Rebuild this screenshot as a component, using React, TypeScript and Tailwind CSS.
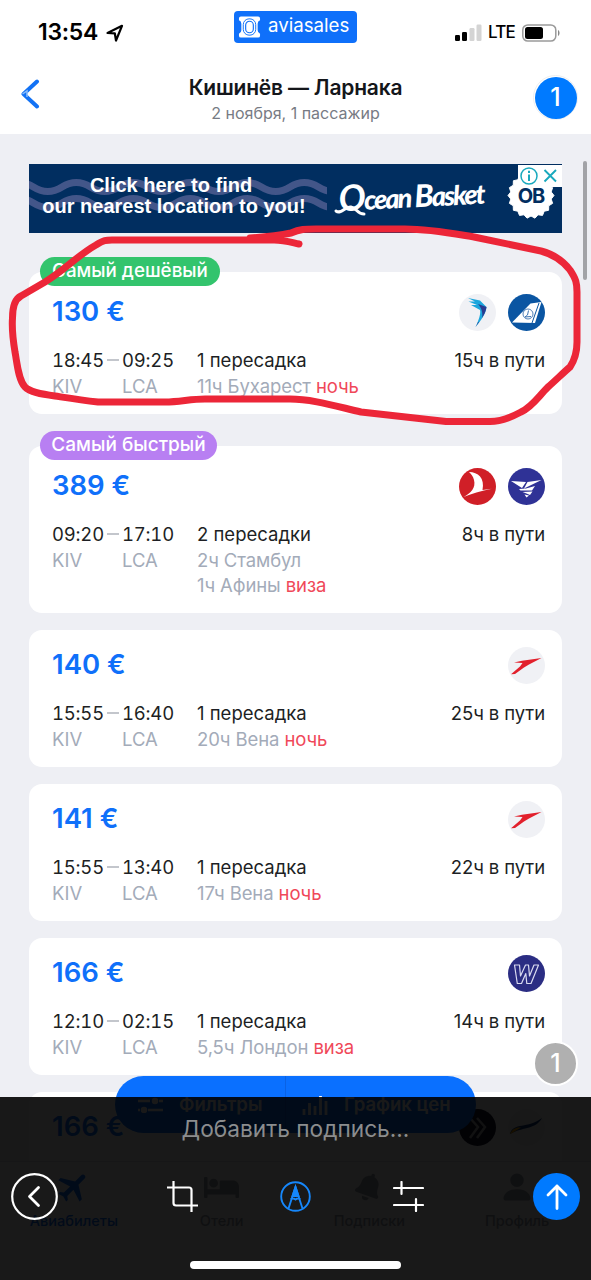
import React from "react";
import { MdFlight } from "react-icons/md";
import { FaBed, FaBell } from "react-icons/fa";
import { BsPersonFill } from "react-icons/bs";

type Stop = { text: string; warn?: string };
type Ticket = {
  price: string;
  from: string;
  to: string;
  stops: string;
  via: Stop[];
  total: string;
  logos: React.ReactNode[];
  badge?: { text: string; style: string };
};

function Logo({ bg, children }: { bg: string; children: React.ReactNode }) {
  return (
    <svg viewBox="0 0 37 37" className="size-[37px]">
      <circle cx="18.5" cy="18.5" r="18.5" fill={bg} />
      {children}
    </svg>
  );
}

const hiSky = (
  <Logo bg="#f0f1f5">
    <path d="M9 4 L21 6.500 L27.500 13 C27 20 22 26 16.500 33 C20 26 22 19 21 16 L12 11 L18 11 L9.500 7.500 L16 7.500 Z" fill="#1ba6dc" />
    <path d="M19 10 L27.500 13 C27 17 25 21 23 24 C24 19 23 15 19 10 Z" fill="#2a3b90" />
    <path d="M19 28.500 L20.500 27.500 L16.500 33 Z" fill="#2a3b90" />
  </Logo>
);
const tarom = (
  <Logo bg="#0a55a2">
    <path d="M4 28.500 L22.500 9.500 L33.500 8 L27 29 Z" fill="#fff" />
    <path d="M31 9 L24 29" stroke="#0a55a2" strokeWidth="1" />
    <circle cx="20" cy="20" r="5" fill="none" stroke="#3d73b0" strokeWidth="0.9" />
    <path d="M20.500 16.500 L19.500 21 L17 23 L23 22.500" fill="none" stroke="#3d73b0" strokeWidth="1" />
  </Logo>
);
const turkish = (
  <Logo bg="#d01f27">
    <path d="M10 4 C19 4 26 10 23.500 22 L33 20.800 C22 23 12 26 4.500 29 C12 25 17 20 15 12 C14 8 12 6 10 4 Z" fill="#fff" />
  </Logo>
);
const bluebird = (
  <Logo bg="#2f3296">
    <path d="M3 13 L18 14 L14 20 Z M19.500 14 L33.500 12 L16 20.500 Z M11 21 L18 20.500 L27 18 L24 22.500 L12.500 22.500 Z M14.500 24 L24.500 23.500 L22 27 L18.500 25.500 Z M16.500 26.500 L21 27.500 L18.500 29.500 Z" fill="#fff" />
  </Logo>
);
const austrian = (
  <Logo bg="#f0f1f5">
    <path d="M6 15.500 L14 13.800 L33.500 11 L21 17.500 L16 20.500 L7 27 L3 27.300 L12 19.500 L14.500 16 Z" fill="#e2202c" />
  </Logo>
);
const wizz = (
  <Logo bg="#2b2d83">
    <path d="M6.500 10 L11.500 10 L12.500 21 L17.500 10 L20.500 10 L21.500 21 L26 10 L30.500 10 L23 28.500 L18.800 28.500 L17.800 18.500 L13.500 28.500 L9.300 28.500 Z" fill="none" stroke="#d9daf0" strokeWidth="1.2" strokeLinejoin="round" />
  </Logo>
);
const fly = (
  <Logo bg="#16162e">
    <path d="M11 9 L19 18 L11 29 M18 9 L26 18 L18 29" fill="none" stroke="#aaa" strokeWidth="2.500" />
  </Logo>
);
const pegasus = (
  <Logo bg="#f0f1f5">
    <path d="M2 25 C5 13 20 20 34 9 C28 20 16 18 4 24 Z" fill="#123a7c" />
    <path d="M2 25 C4 20 8 18 13 18.500 L4 24 Z" fill="#f5a400" />
  </Logo>
);

const green = "bg-[#33c46d] w-[180px] text-[18.800px]";
const violet = "bg-[#b87ff2] w-[177px] text-[19px]";

const tickets: Ticket[] = [
  { price: "130 €", from: "18:45", to: "09:25", stops: "1 пересадка", via: [{ text: "11ч Бухарест", warn: "ночь" }], total: "15ч в пути", logos: [hiSky, tarom], badge: { text: "Самый дешёвый", style: green } },
  { price: "389 €", from: "09:20", to: "17:10", stops: "2 пересадки", via: [{ text: "2ч Стамбул" }, { text: "1ч Афины", warn: "виза" }], total: "8ч в пути", logos: [turkish, bluebird], badge: { text: "Самый быстрый", style: violet } },
  { price: "140 €", from: "15:55", to: "16:40", stops: "1 пересадка", via: [{ text: "20ч Вена", warn: "ночь" }], total: "25ч в пути", logos: [austrian] },
  { price: "141 €", from: "15:55", to: "13:40", stops: "1 пересадка", via: [{ text: "17ч Вена", warn: "ночь" }], total: "22ч в пути", logos: [austrian] },
  { price: "166 €", from: "12:10", to: "02:15", stops: "1 пересадка", via: [{ text: "5,5ч Лондон", warn: "виза" }], total: "14ч в пути", logos: [wizz] },
  { price: "166 €", from: "", to: "", stops: "", via: [], total: "", logos: [fly, pegasus] },
];

function Card({ t }: { t: Ticket }) {
  return (
    <article className={"relative shrink-0 rounded-[13px] bg-white pl-[23px] pr-[17px] pb-[15px] " + (t.badge ? "pt-[22px]" : "pt-[17px]")}>
      {t.badge && (
        <div className={"absolute -top-[15px] left-[11px] flex h-[29px] items-center justify-center whitespace-nowrap rounded-full font-medium text-white " + t.badge.style}>
          {t.badge.text}
        </div>
      )}
      <div className="flex h-[37px] items-center justify-between">
        <span className="-mt-[2px] text-[27.500px] font-semibold text-[#0f70fa]">{t.price}</span>
        <span className="flex gap-3">
          {t.logos.map((l, i) => <React.Fragment key={i}>{l}</React.Fragment>)}
        </span>
      </div>
      <div className="mt-4 flex text-[18.5px] leading-[26px] text-[#1d1f24]">
        <div className="w-[70px]">
          <div className="flex items-center">
            <span className="w-[51px] whitespace-nowrap tabular-nums tracking-[-0.2px]">{t.from}</span>
            {t.from && <i className="ml-[4px] h-[1.5px] w-[12px] bg-[#c3c6cc]" />}
          </div>
          {t.from && <div className="text-[#a3abb9]">KIV</div>}
        </div>
        <div className="w-[75px]">
          <div className="whitespace-nowrap tabular-nums tracking-[-0.2px]">{t.to}</div>
          {t.from && <div className="text-[#a3abb9]">LCA</div>}
        </div>
        <div className="grow">
          <div>{t.stops}</div>
          {t.via.map((v, i) => (
            <div key={i} className={"whitespace-nowrap tracking-[-0.1px] text-[#a3abb9] " + (i ? "leading-[25px]" : "")}>
              {v.text} {v.warn && <span className="text-[#f04859]">{v.warn}</span>}
            </div>
          ))}
        </div>
        <div className="whitespace-nowrap tracking-[-0.1px]">{t.total}</div>
      </div>
    </article>
  );
}

function Header() {
  return (
    <header className="flex h-[134px] shrink-0 flex-col bg-white">
      <div className="flex h-[64px] items-center pl-[38px]">
        <div className="mt-px flex w-[196px] items-center gap-2">
          <span className="text-[23px] font-semibold tracking-[-0.3px] text-black">13:54</span>
          <svg viewBox="0 0 18 18" className="size-[18px]">
            <path d="M1.500 9 L16 1.800 L10 16.500 L8.800 9.300 Z" fill="none" stroke="#000" strokeWidth="2.200" strokeLinejoin="round" />
          </svg>
        </div>
        <div className="-mt-[10px] flex h-[32px] w-[123px] items-center rounded-[4px] bg-[#0f70fa] pl-[4px]">
          <svg viewBox="0 0 24 24" className="h-[24px] w-[23px]">
            <path d="M3 1 H21 A2 2 0 0 1 23 3 V5 Q20.500 6 20.500 8.500 V15.500 Q20.500 18 23 19 V21 A2 2 0 0 1 21 23 H3 A2 2 0 0 1 1 21 V19 Q3.500 18 3.500 15.500 V8.500 Q3.500 6 1 5 V3 A2 2 0 0 1 3 1 Z" fill="#fff" />
            <rect x="5.500" y="3.500" width="13" height="17" rx="6" fill="none" stroke="#0f70fa" strokeWidth="1" />
            <rect x="8" y="6" width="8" height="12" rx="4" fill="none" stroke="#0f70fa" strokeWidth="1.200" />
          </svg>
          <span className="-mt-[2px] ml-[7px] text-[18.700px] text-white">aviasales</span>
        </div>
        <div className="ml-[98px] mt-px flex items-center">
          <svg viewBox="0 0 27 18" className="h-[18px] w-[27px]">
            <rect x="0" y="11" width="5" height="6" rx="1.200" />
            <rect x="7" y="8" width="5" height="9" rx="1.200" />
            <rect x="14.500" y="4" width="5" height="13" rx="1.200" fill="#d4d4d4" />
            <rect x="21.500" y="0.500" width="5" height="16.500" rx="1.200" fill="#d4d4d4" />
          </svg>
          <span className="ml-[6px] w-[30px] text-[17px] font-medium tracking-[-0.8px] text-black">LTE</span>
          <svg viewBox="0 0 39 18" className="ml-[4px] h-[18px] w-[39px]">
            <rect x="0.800" y="0.900" width="33" height="16.200" rx="5" fill="none" stroke="#9a9a9a" strokeWidth="1.500" />
            <rect x="3" y="3" width="18" height="12" rx="2.500" />
            <path d="M36 6 C38 7 38 11 36 12 Z" fill="#888" />
          </svg>
        </div>
      </div>
      <div className="flex h-[70px] justify-between pl-[21px] pr-[13px]">
        <svg viewBox="0 0 18 30" className="mt-[15px] h-[30px] w-[44px]" preserveAspectRatio="xMinYMin">
          <path d="M16 2.500 L2.500 15 L16 27.500" fill="none" stroke="#1272f5" strokeWidth="4" strokeLinecap="round" strokeLinejoin="round" />
          <path d="M1.500 15 L6 12 V18" stroke="#8bbcf9" fill="none" strokeWidth="1.500" />
        </svg>
        <div className="mt-[10px] -ml-[7px] text-center">
          <h1 className="text-[21px] font-semibold leading-[28px] tracking-[-0.2px] text-[#14161a]">Кишинёв — Ларнака</h1>
          <p className="text-[16px] leading-[22px] text-[#777b84]">2 ноября, 1 пассажир</p>
        </div>
        <div className="mt-[11px] flex size-[45px] items-center justify-center rounded-full border-[1.5px] border-[#eeeff0] bg-white">
          <div className="flex size-[42px] items-center justify-center rounded-full bg-[#007aff] text-[25px] font-medium text-white">1</div>
        </div>
      </div>
    </header>
  );
}

const gear = Array.from({ length: 36 }, (_, i) => {
  const r = i % 2 ? 20.5 : 23;
  const a = (i / 36) * Math.PI * 2;
  return `${23 + r * Math.cos(a)},${23 + r * Math.sin(a)}`;
}).join(" ");

const wave = "q14.250 -9 28.500 0" + " t28.500 0".repeat(11);

function Banner() {
  return (
    <div className="relative flex h-[69px] shrink-0 overflow-hidden bg-[#012e60] text-white">
      <svg viewBox="0 0 533 69" className="absolute inset-0 size-full">
        <g fill="none" stroke="#435689" strokeWidth="7">
          <path d={"M-24 23 " + wave} />
          <path d={"M-24 39 " + wave} />
        </g>
        <rect x="298" width="235" height="69" fill="#012e60" />
        <path d="M307 47 C312 51 316 42 322 43 C328 44 328 50 335 50" fill="none" stroke="#fff" strokeWidth="3" strokeLinecap="round" />
        <g transform="translate(479 8.500)"><polygon points={gear} fill="#fff" stroke="#fff" strokeWidth="1" strokeLinejoin="round" /></g>
      </svg>
      <div className="relative w-[290px] pt-[11px] text-center font-['Liberation_Sans'] text-[20px] font-bold leading-[21px]">
        <div className="whitespace-nowrap pr-[6px]">Click here to find</div>
        <div className="whitespace-nowrap">our nearest location to you!</div>
      </div>
      <div className="relative ml-[20px] mt-[11px] w-[159px] -rotate-3 whitespace-nowrap font-['Lato'] text-[27px] font-black italic leading-[36px] tracking-[-1.9px]">
        <span className="text-[36px] font-bold">O</span>cean<span className="ml-[4px] text-[31px]">B</span>asket
      </div>
      <div className="relative ml-[10px] mt-[20px] w-[46px] text-center text-[20px] font-bold leading-[25px] tracking-[-1px] text-[#012e60]">OB</div>
      <div className="absolute right-0 top-[1px] flex h-[22px] w-[44px] items-center justify-center bg-white">
        <svg viewBox="0 0 44 22" className="h-[22px] w-[44px]">
          <g fill="none" stroke="#19a9bd" strokeWidth="1.500">
            <circle cx="11" cy="11" r="8" />
            <path d="M26.500 5 L38 16.500 M38 5 L26.500 16.500" strokeWidth="1.900" />
            <path d="M11 9.500 V16 M11 5.800 V8" strokeWidth="2" />
          </g>
        </svg>
      </div>
    </div>
  );
}

function AppBottom() {
  const tabs = [
    { label: "Авиабилеты", icon: <MdFlight className="size-[38px] rotate-45" />, color: "text-[#0f70fa]" },
    { label: "Отели", icon: <FaBed className="size-[35px]" />, color: "text-[#9aa1ae]" },
    { label: "Подписки", icon: <FaBell className="size-[28px] rotate-[20deg]" />, color: "text-[#9aa1ae]" },
    { label: "Профиль", icon: <BsPersonFill className="size-[36px]" />, color: "text-[#9aa1ae]" },
  ];
  return (
    <div className="absolute inset-x-0 bottom-0 flex h-[204px] flex-col">
      <div className="ml-[115px] flex h-[57px] w-[361px] shrink-0 rounded-full bg-[#0a70ff] text-[18.500px] font-semibold text-white">
        <div className="flex w-[171px] items-center gap-[15px] border-r border-[#0a62e4] pl-[22px]">
          <svg viewBox="0 0 27 16" className="h-[16px] w-[27px]" stroke="#fff" strokeWidth="2.500">
            <path d="M1 4 H13 M22 4 H26 M1 13 H3 M11 13 H26" />
            <circle cx="18" cy="4" r="2" fill="#fff" /><circle cx="7" cy="13" r="2" fill="#fff" />
          </svg>
          Фильтры
        </div>
        <div className="flex items-center gap-[16px] pl-[16px]">
          <svg viewBox="0 0 26 20" className="h-[20px] w-[26px]" stroke="#fff" strokeWidth="2.800">
            <path d="M2 20 V14 M7.500 20 V8 M13 20 V11 M18.500 20 V1 M24 20 V6" />
          </svg>
          График цен
        </div>
      </div>
      <nav className="mt-[28px] grid grow grid-cols-4 border-t border-[#dcdfe5] bg-[#fafafa] text-[14.500px] font-medium">
        {tabs.map((tab) => (
          <div key={tab.label} className={"flex flex-col items-center pt-[5px] " + tab.color}>
            <div className="flex h-[40px] items-center">{tab.icon}</div>
            <span className="mt-[3px]">{tab.label}</span>
          </div>
        ))}
      </nav>
    </div>
  );
}

function EditorPanel() {
  return (
    <div className="absolute inset-x-0 bottom-0 flex h-[183px] flex-col items-center bg-black/90">
      <div className="mt-[16px] text-[22.700px] leading-[32px] text-[#8b8d8e]">Добавить подпись...</div>
      <div className="mt-[28px] flex h-[47px] w-full items-center justify-between px-[11px]">
        <svg viewBox="0 0 47 47" className="size-[47px]" fill="none" stroke="#fff" strokeLinecap="round">
          <circle cx="23.500" cy="23.500" r="22.300" strokeWidth="2.200" />
          <path d="M27.500 14.500 L18.500 23.500 L27.500 32.500" strokeWidth="2.800" strokeLinejoin="round" />
        </svg>
        <div className="flex gap-[82px]">
          <svg viewBox="0 0 31 31" className="size-[31px]" fill="none" stroke="#fff" strokeWidth="2.200">
            <path d="M0 6.500 H22 Q24.500 6.500 24.500 9 V31 M6.500 0 V22 Q6.500 24.500 9 24.500 H31" />
          </svg>
          <svg viewBox="0 0 31 31" className="size-[31px]" fill="none" stroke="#1687fb" strokeWidth="1.900">
            <circle cx="15.500" cy="15.500" r="14.300" />
            <path d="M8.500 27.500 L15.500 6 L22.500 27.500 M10.500 18.500 Q13 16.500 15.500 18.500 Q18 16.500 20.500 18.500" />
            <path d="M12.500 15 L15.500 6 L18.500 15 Z" fill="#1687fb" />
          </svg>
          <svg viewBox="0 0 31 31" className="size-[31px]" fill="none" stroke="#fff" strokeWidth="2.200" strokeLinecap="round">
            <path d="M1 7 H30 M8.500 1 V13 M1 24 H30 M23 18 V30" />
          </svg>
        </div>
        <div className="flex size-[47px] items-center justify-center rounded-full bg-[#007aff]">
          <svg viewBox="0 0 24 28" className="h-[28px] w-[24px]" fill="none" stroke="#fff" strokeWidth="2.800" strokeLinecap="round" strokeLinejoin="round">
            <path d="M12 25.500 V3 M3 12 L12 3 L21 12" />
          </svg>
        </div>
      </div>
      <div className="mt-[41px] h-[8px] w-[211px] rounded-full bg-white" />
    </div>
  );
}

export default function App() {
  return (
    <div className="relative flex h-[1280px] w-[591px] flex-col overflow-hidden bg-[#eeeff4] font-['Inter',sans-serif]">
      <Header />
      <main className="mx-[29px] mt-[30px] flex flex-col">
        <Banner />
        <div className="mt-[39px] flex flex-col gap-8">
          {tickets.slice(0, 2).map((t, i) => <Card key={i} t={t} />)}
        </div>
        <div className="mt-[17px] flex flex-col gap-[17px]">
          {tickets.slice(2).map((t, i) => <Card key={i} t={t} />)}
        </div>
      </main>
      <div className="absolute right-[4px] top-[161px] h-[119px] w-[4px] rounded-full bg-[#a2a3a7]" />
      <AppBottom />
      <EditorPanel />
      <div className="absolute right-[13px] top-[1041px] flex size-[45px] items-center justify-center rounded-full border-2 border-white bg-[#b0b0b0] text-[25px] font-medium text-white">1</div>
      <svg viewBox="0 0 591 1280" className="pointer-events-none absolute inset-0 size-full">
        <path
          d="M250 238 C268 237 282 235 291 233 C300 229 305 229 316 229 H405 C430 229 450 233 474 237 L541 251 C556 255 564 262 570 270 C576 279 577 283 577 292 V342 C577 352 574 361 570 367 C563 373 556 380 548 387 C538 397 532 407 521 412 C510 418 500 421.500 490 421.500 H446 L361 412 C335 406 312 399 290 399 H205 C190 399 180 402 165 402 H98 C80 400 68 398 55 396 C40 394 30 392 25 387 C18 379 17 362 15 352 C13 340 12 325 12.500 318 C12.500 306 15 299 21 296 L45 282 C66 269 78 255 96 245 C104 240 106 240 112 240 H274 C284 240 290 242 299 244"
          fill="none" stroke="#ec2638" strokeWidth="7" strokeLinecap="round" strokeLinejoin="round"
        />
      </svg>
    </div>
  );
}
